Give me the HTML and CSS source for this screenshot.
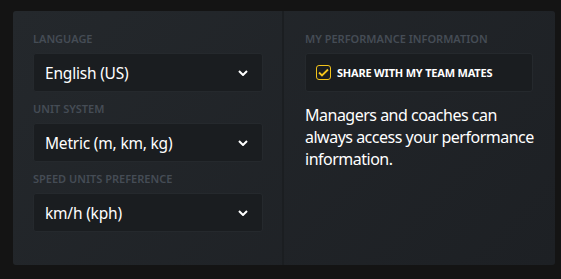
FILE: index.html
```html
<!DOCTYPE html>
<html lang="en">
<head>
    <meta charset="UTF-8">
    <meta name="viewport" content="width=device-width, initial-scale=1.0">
    <link rel="stylesheet" href="styles.css">
</head>
<body>
    <div class="panel">
        <div class="column left">
            <div class="field-group">
                <label class="field-label">Language</label>
                <div class="select">
                    <span>English (US)</span>
                    <svg class="chevron" width="10" height="6" viewBox="0 0 10 6"><path d="M1 1l4 4 4-4" fill="none" stroke="#fff" stroke-width="2"/></svg>
                </div>
            </div>
            <div class="field-group">
                <label class="field-label">Unit system</label>
                <div class="select">
                    <span>Metric (m, km, kg)</span>
                    <svg class="chevron" width="10" height="6" viewBox="0 0 10 6"><path d="M1 1l4 4 4-4" fill="none" stroke="#fff" stroke-width="2"/></svg>
                </div>
            </div>
            <div class="field-group">
                <label class="field-label">Speed units preference</label>
                <div class="select">
                    <span>km/h (kph)</span>
                    <svg class="chevron" width="10" height="6" viewBox="0 0 10 6"><path d="M1 1l4 4 4-4" fill="none" stroke="#fff" stroke-width="2"/></svg>
                </div>
            </div>
        </div>
        <div class="column right">
            <div class="field-group">
                <label class="field-label">My performance information</label>
                <div class="check-box">
                    <span class="checkbox">
                        <svg width="11" height="9" viewBox="0 0 11 9"><path d="M1 4.5l3 3 6-6" fill="none" stroke="#f2c31b" stroke-width="1.8"/></svg>
                    </span>
                    <span class="check-text">Share with my team mates</span>
                </div>
            </div>
            <p class="note">Managers and coaches can always access your performance information.</p>
        </div>
    </div>
</body>
</html>
```

FILE: styles.css
```css
body {
    margin: 0;
    background: #141414;
    font-family: "Noto Sans", "Open Sans", sans-serif;
    color: #fff;
}
.panel {
    display: flex;
    margin: 11px 0 0 13px;
    width: 542px;
    height: 254px;
    border-radius: 3px;
    background: linear-gradient(135deg, #24282c, #1d2024);
}
.column {
    padding-top: 21px;
    box-sizing: border-box;
}
.left {
    width: 271px;
    padding-left: 20px;
    border-right: 2px solid #1b1e21;
}
.right {
    flex: 1;
    padding-left: 21px;
}
.field-group {
    margin-bottom: 10px;
}
.field-label {
    display: block;
    font-size: 11px;
    line-height: 14px;
    font-weight: 600;
    text-transform: uppercase;
    color: #454c55;
    margin-bottom: 7px;
}
.select {
    display: flex;
    align-items: center;
    justify-content: space-between;
    width: 230px;
    height: 39px;
    box-sizing: border-box;
    padding: 0 14px 0 11px;
    background: #1a1d20;
    border: 1px solid #25292d;
    border-radius: 3px;
    font-size: 15.5px;
    letter-spacing: -0.2px;
}
.check-box {
    display: flex;
    align-items: center;
    gap: 6px;
    width: 228px;
    height: 39px;
    box-sizing: border-box;
    padding-left: 10px;
    background: #1a1d20;
    border: 1px solid #25292d;
    border-radius: 3px;
}
.checkbox {
    display: flex;
    align-items: center;
    justify-content: center;
    width: 15px;
    height: 15px;
    box-sizing: border-box;
    border: 1.5px solid #f2c31b;
    border-radius: 3px;
}
.check-text {
    font-size: 11px;
    font-weight: 700;
    letter-spacing: -0.2px;
    text-transform: uppercase;
}
.note {
    margin: 12px 0 0;
    width: 236px;
    font-size: 16px;
    line-height: 22px;
    letter-spacing: -0.5px;
}
```
